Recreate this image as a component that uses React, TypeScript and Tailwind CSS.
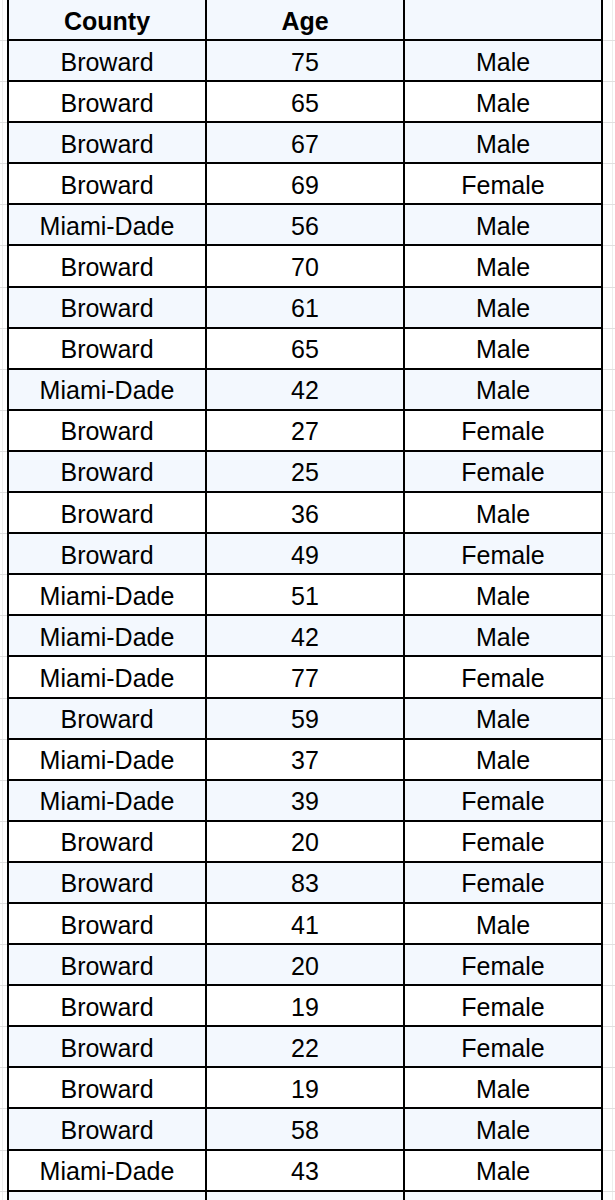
import React from 'react';

type Row = [string, number, string];

const rows: Row[] = [
  ['Broward', 75, 'Male'],
  ['Broward', 65, 'Male'],
  ['Broward', 67, 'Male'],
  ['Broward', 69, 'Female'],
  ['Miami-Dade', 56, 'Male'],
  ['Broward', 70, 'Male'],
  ['Broward', 61, 'Male'],
  ['Broward', 65, 'Male'],
  ['Miami-Dade', 42, 'Male'],
  ['Broward', 27, 'Female'],
  ['Broward', 25, 'Female'],
  ['Broward', 36, 'Male'],
  ['Broward', 49, 'Female'],
  ['Miami-Dade', 51, 'Male'],
  ['Miami-Dade', 42, 'Male'],
  ['Miami-Dade', 77, 'Female'],
  ['Broward', 59, 'Male'],
  ['Miami-Dade', 37, 'Male'],
  ['Miami-Dade', 39, 'Female'],
  ['Broward', 20, 'Female'],
  ['Broward', 83, 'Female'],
  ['Broward', 41, 'Male'],
  ['Broward', 20, 'Female'],
  ['Broward', 19, 'Female'],
  ['Broward', 22, 'Female'],
  ['Broward', 19, 'Male'],
  ['Broward', 58, 'Male'],
  ['Miami-Dade', 43, 'Male'],
];

const cell = 'w-[198px] shrink-0 flex items-center justify-center pt-[3px] border-r-2 border-b-2 border-black';

function SheetRow({ cells, shaded, bold, height }: { cells: (string | number)[]; shaded: boolean; bold?: boolean; height: string }) {
  return (
    <div className={`flex ${height}`}>
      {/* gutter with faint sheet gridlines */}
      <div className="w-[7px] shrink-0 flex border-b border-[#e0e0e0]">
        <div className="ml-[2px] border-l border-[#ededed]" />
      </div>
      <div className={`flex border-l-2 border-black ${shaded ? 'bg-[#f3f8fe]' : 'bg-white'} ${bold ? 'font-bold' : ''}`}>
        {cells.map((c, i) => (
          <div key={i} className={cell}>{c}</div>
        ))}
      </div>
      <div className="flex-1 flex border-b border-[#e0e0e0]">
        <div className="ml-[9px] border-l border-[#ededed]" />
      </div>
    </div>
  );
}

export default function App() {
  return (
    <div className="w-[615px] h-[1200px] overflow-hidden bg-white text-black text-[25px] leading-none font-['Liberation_Sans',Arial,sans-serif]">
      <SheetRow cells={['County', 'Age', '']} shaded bold height="h-[41px]" />
      {rows.map((r, i) => (
        <SheetRow key={i} cells={r} shaded={i % 2 === 0} height="h-[41.1px]" />
      ))}
      <SheetRow cells={['', '', '']} shaded height="h-[41.1px]" />
    </div>
  );
}
